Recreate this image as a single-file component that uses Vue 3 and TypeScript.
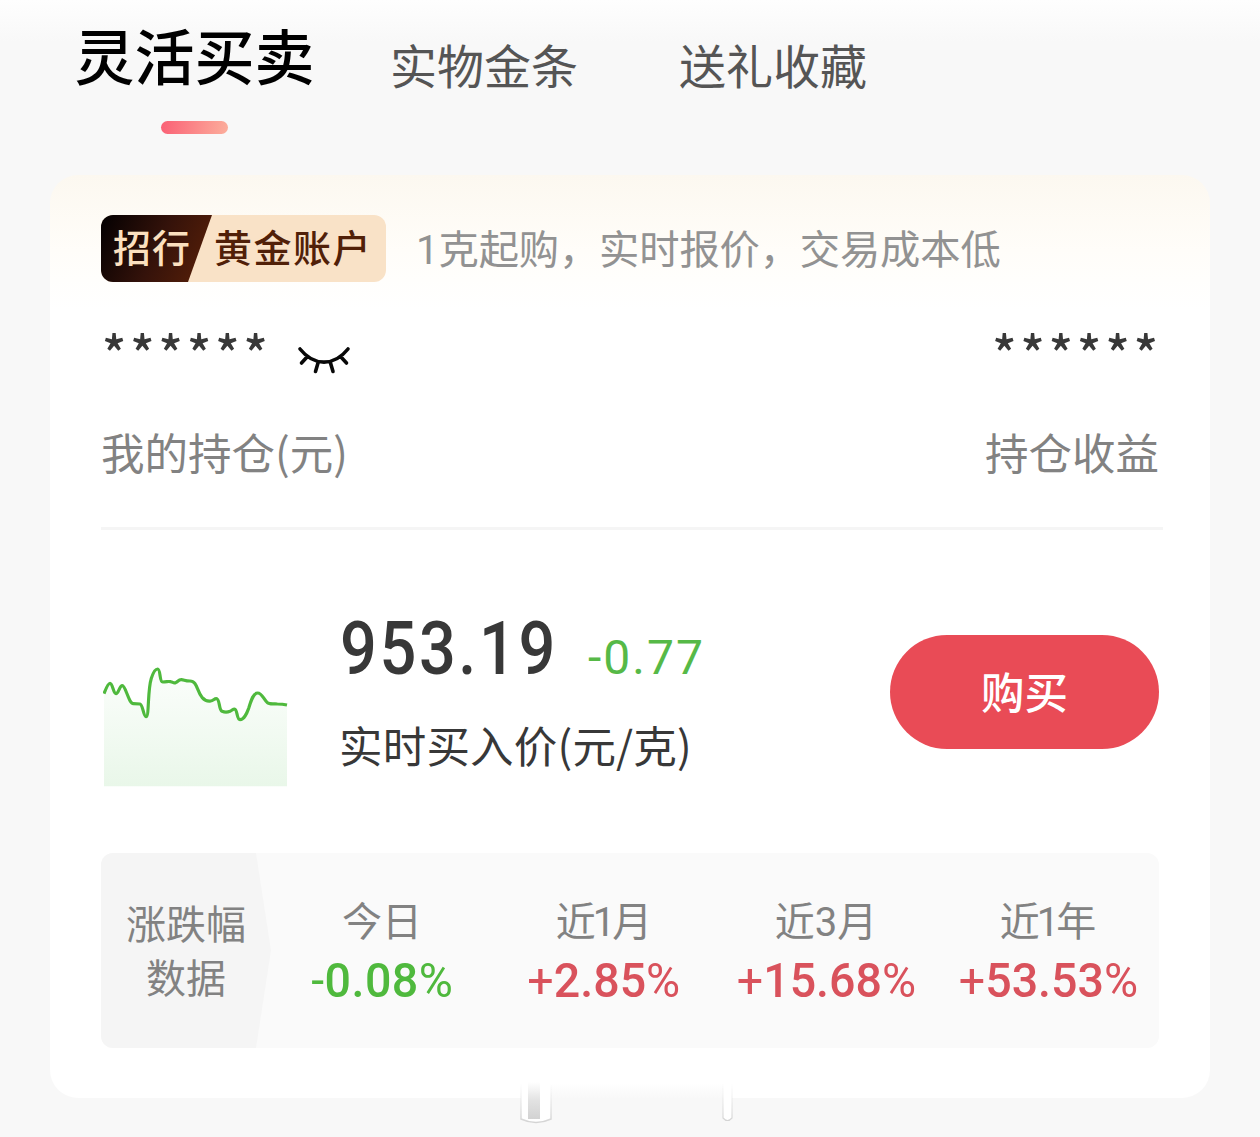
<script setup lang="ts">
interface Change {
  label: string
  narrow: boolean
  sign: string
  amount: string
  tone: 'up' | 'down'
}

const tabs: string[] = ['实物金条', '送礼收藏']

const changes: Change[] = [
  { label: '今日', narrow: false, sign: '-', amount: '0.08', tone: 'down' },
  { label: '近1月', narrow: true, sign: '+', amount: '2.85', tone: 'up' },
  { label: '近3月', narrow: false, sign: '+', amount: '15.68', tone: 'up' },
  { label: '近1年', narrow: true, sign: '+', amount: '53.53', tone: 'up' },
]

const trend =
  'M42 278C48 262 54 247 60 247C68 247 70 278 78 278C86 278 88 254 97 254C107 254 116 308 130 308L150 309C159 311 160 347 168 347C178 347 172 270 184 232C190 213 197 204 203 204C212 204 208 243 218 243C232 243 232 240 242 242C250 244 250 247 257 245C264 242 265 236 274 236C283 236 284 240 300 240C322 240 320 270 336 289C345 299 352 302 362 300C370 299 372 293 379 293C390 293 386 327 396 331C404 334 412 334 420 331C427 328 428 324 434 324C442 324 440 356 450 356C463 356 470 338 476 322C484 296 490 276 503 276C516 276 520 294 532 305C538 311 550 308 562 309C575 309 582 310 591 312'
</script>

<template>
  <main class="page">
    <nav class="tabs">
      <div class="tab active">
        <span>灵活买卖</span>
        <i class="indicator"></i>
      </div>
      <span v-for="tab in tabs" :key="tab" class="tab other">{{ tab }}</span>
    </nav>

    <section class="card">
      <header class="head">
        <div class="badge">
          <span class="bank">招行</span>
          <span class="account">黄金账户</span>
        </div>
        <p class="slogan">1克起购，实时报价，交易成本低</p>
      </header>

      <div class="holdings">
        <div class="holding">
          <div class="masked">
            <span class="stars">******</span>
            <svg class="eye" width="54" height="28" viewBox="0 0 54 28" fill="none" stroke="#080808" stroke-width="3.6" stroke-linecap="round">
              <path d="M3 3C17 20.500 37 20.500 51 3M10 11L4.500 17M44 11L49.500 17M21 17L18.500 25.500M33.500 17L36 25.500" />
            </svg>
          </div>
          <p class="caption">我的持仓(元)</p>
        </div>
        <div class="holding right">
          <span class="stars">******</span>
          <p class="caption">持仓收益</p>
        </div>
      </div>

      <div class="quote">
        <svg class="chart" width="185" height="124" viewBox="39 189 555 372">
          <defs>
            <linearGradient id="trendFill" x1="0" y1="0" x2="0" y2="1">
              <stop offset="0" stop-color="#fcfefc" />
              <stop offset="1" stop-color="#e9f7e9" />
            </linearGradient>
          </defs>
          <path :d="trend + 'V556H42Z'" fill="url(#trendFill)" />
          <path :d="trend" fill="none" stroke="#4fb93d" stroke-width="9.5" stroke-linejoin="round" />
        </svg>
        <div class="price">
          <div class="figures">
            <span class="current">953.19</span>
            <span class="delta">-0.77</span>
          </div>
          <p class="price-label">实时买入价(元/克)</p>
        </div>
        <button class="buy" type="button">购买</button>
      </div>

      <div class="stats">
        <div class="stats-title"><span>涨跌幅<br />数据</span></div>
        <div class="stats-list">
          <div v-for="item in changes" :key="item.label" class="stat">
            <span class="stat-label" :class="{ narrow: item.narrow }">{{ item.label }}</span>
            <span class="stat-value" :class="item.tone"><span class="thin">{{ item.sign }}</span>{{ item.amount }}<span class="thin">%</span></span>
          </div>
        </div>
      </div>
    </section>

    <svg class="peek" width="240" height="50" viewBox="0 0 240 50">
      <defs>
        <linearGradient id="fadeGrey" x1="0" y1="0" x2="0" y2="1">
          <stop offset="0" stop-color="#e4e4e4" stop-opacity="0" />
          <stop offset="0.5" stop-color="#e2e2e2" />
          <stop offset="1" stop-color="#d2d2d2" />
        </linearGradient>
        <linearGradient id="fadeEdge" x1="0" y1="0" x2="0" y2="1">
          <stop offset="0" stop-color="#e0e0e0" stop-opacity="0" />
          <stop offset="1" stop-color="#d4d4d4" />
        </linearGradient>
        <linearGradient id="haze" x1="0" y1="0" x2="0" y2="1">
          <stop offset="0" stop-color="#f8f8f8" stop-opacity="0" />
          <stop offset="1" stop-color="#f8f8f8" />
        </linearGradient>
        <filter id="soften"><feGaussianBlur stdDeviation="0.7" /></filter>
      </defs>
      <rect x="36" y="4" width="176" height="16" fill="url(#haze)" />
      <g filter="url(#soften)">
        <path d="M7 4V40Q22 47 37 40V4" fill="#fff" stroke="url(#fadeEdge)" stroke-width="1.500" />
        <rect x="14" y="3" width="12" height="37" fill="url(#fadeGrey)" />
        <path d="M209 4V39Q213.500 44 218 39V4" fill="#fff" stroke="url(#fadeEdge)" stroke-width="1.200" />
      </g>
    </svg>
  </main>
</template>

<style>
body {
  margin: 0;
  background: #f8f8f8;
}
</style>

<style scoped>
.page {
  position: relative;
  box-sizing: border-box;
  width: 1260px;
  height: 1137px;
  overflow: hidden;
  background: linear-gradient(#fefefe 0, #f8f8f8 42px);
  font-family: 'Noto Sans CJK SC', 'Noto Sans', sans-serif;
  color: #383838;
}

p {
  margin: 0;
}

.tabs {
  display: flex;
  align-items: flex-start;
  height: 175px;
  padding-left: 75px;
  white-space: nowrap;
}

.active {
  display: flex;
  flex-direction: column;
  align-items: center;
  width: 239px;
  margin-right: 76px;
  font-size: 60px;
  font-weight: 500;
  line-height: 80px;
  color: #000;
  padding-top: 14px;
}

.indicator {
  width: 67px;
  height: 13px;
  margin-top: 27px;
  border-radius: 7px;
  background: linear-gradient(100deg, #fa6075, #fcae9c);
}

.other {
  width: 188px;
  margin-right: 101px;
  padding-top: 34px;
  font-size: 47px;
  line-height: 60px;
  color: #555;
}

.card {
  box-sizing: border-box;
  width: 1160px;
  height: 923px;
  margin-left: 50px;
  padding: 40px 51px 50px;
  border-radius: 28px;
  background: linear-gradient(#fcf8f0 0, #fffdf9 75px, #fff 135px);
}

.head {
  display: flex;
  align-items: center;
  height: 67px;
}

.badge {
  display: flex;
  width: 285px;
  height: 67px;
  border-radius: 12px;
  overflow: hidden;
  background: #f9e2c7;
  font-size: 38px;
  font-weight: 500;
  line-height: 62px;
  white-space: nowrap;
}

.bank {
  box-sizing: border-box;
  width: 111px;
  padding-left: 12px;
  color: #fbe0bf;
  letter-spacing: 1px;
  background: linear-gradient(115deg, #080202 5%, #34120a 50%, #5c2108);
  clip-path: polygon(0 0, 100% 0, 87px 100%, 0 100%);
}

.account {
  padding-left: 2px;
  color: #512008;
  letter-spacing: 1.5px;
}

.slogan {
  margin-left: 30px;
  padding-top: 4px;
  font-family: Roboto, 'Noto Sans CJK SC', sans-serif;
  font-size: 40.3px;
  line-height: 63px;
  letter-spacing: -0.15px;
  color: #929292;
  white-space: nowrap;
}

.holdings {
  display: flex;
  justify-content: space-between;
  height: 245px;
  border-bottom: 3px solid #f5f5f5;
  margin-right: -4px;
}

.holding {
  padding-top: 39px;
}

.right {
  margin-right: 4px;
  text-align: right;
}

.masked {
  display: flex;
}

.stars {
  display: block;
  height: 60px;
  font-size: 50px;
  font-weight: 500;
  line-height: 60px;
  letter-spacing: 4.1px;
  padding-left: 1px;
}

.right .stars {
  margin-right: -3px;
}

.eye {
  margin: 25px 0 0 25px;
}

.caption {
  margin-top: 41px;
  font-size: 43.5px;
  line-height: 60px;
  color: #828282;
  white-space: nowrap;
}

.quote {
  display: flex;
  height: 322px;
  padding-top: 1px;
}

.chart {
  margin: 133px 0 0 2px;
  flex: none;
}

.price {
  width: 600px;
  padding: 73px 0 0 52px;
  box-sizing: border-box;
}

.figures {
  display: flex;
  align-items: baseline;
  height: 90px;
  font-family: Roboto, sans-serif;
  line-height: 90px;
}

.current {
  width: 248px;
  font-size: 74.5px;
  font-weight: 500;
  letter-spacing: 3px;
  transform: scaleX(0.87);
  transform-origin: left;
}

.delta {
  font-size: 48px;
  letter-spacing: 2px;
  color: #56b947;
}

.price-label {
  margin: 21px 0 0 -1px;
  font-size: 43.5px;
  line-height: 60px;
  letter-spacing: 0.2px;
  white-space: nowrap;
}

.buy {
  width: 269px;
  height: 114px;
  margin: 104px 0 0 2px;
  padding: 0 0 2px;
  flex: none;
  border: 0;
  border-radius: 57px;
  background: #e94b56;
  color: #fff;
  font: 500 43.5px/60px 'Noto Sans CJK SC', sans-serif;
}

.stats {
  display: flex;
  height: 195px;
  border-radius: 12px;
  overflow: hidden;
  background: #fafafa;
}

.stats-title {
  display: flex;
  align-items: center;
  width: 170px;
  box-sizing: border-box;
  padding: 0 0 4px 25px;
  background: #f5f5f5;
  clip-path: polygon(0 0, 155px 0, 100% 50%, 155px 100%, 0 100%);
  font-size: 40px;
  line-height: 54px;
  color: #828282;
  text-align: center;
}

.stats-list {
  display: flex;
  width: 888px;
}

.stat {
  display: flex;
  flex-direction: column;
  align-items: center;
  width: 222px;
  white-space: nowrap;
}

.stat-label {
  margin-top: 42px;
  font-family: Roboto, 'Noto Sans CJK SC', sans-serif;
  font-size: 40px;
  line-height: 56px;
  color: #828282;
}

.narrow {
  padding-right: 3px;
  letter-spacing: -3px;
}

.stat-value {
  font-family: Roboto, sans-serif;
  font-size: 48px;
  font-weight: 500;
  line-height: 60px;
  transform: scaleX(0.97);
}

.thin {
  font-weight: 400;
}

.down {
  color: #4fb93d;
  letter-spacing: 0.5px;
}

.up {
  color: #d9525c;
}

.peek {
  position: absolute;
  left: 514px;
  top: 1079px;
}
</style>
